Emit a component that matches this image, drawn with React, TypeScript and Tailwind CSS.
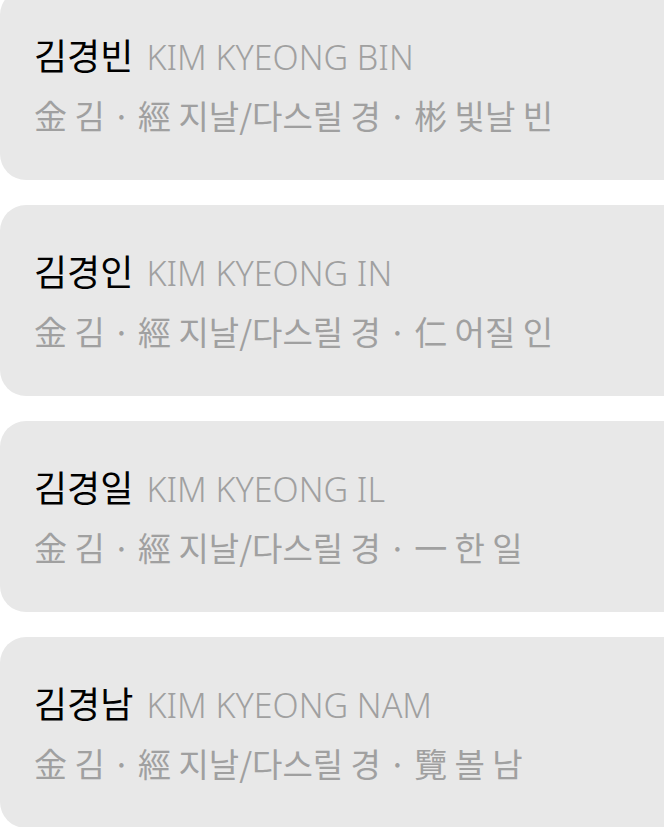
const names = [
  { ko: "김경빈", en: "KIM KYEONG BIN", meaning: "金 김 · 經 지날/다스릴 경 · 彬 빛날 빈" },
  { ko: "김경인", en: "KIM KYEONG IN", meaning: "金 김 · 經 지날/다스릴 경 · 仁 어질 인" },
  { ko: "김경일", en: "KIM KYEONG IL", meaning: "金 김 · 經 지날/다스릴 경 · 一 한 일" },
  { ko: "김경남", en: "KIM KYEONG NAM", meaning: "金 김 · 經 지날/다스릴 경 · 覽 볼 남" },
];

const cjk = { fontFamily: '"Noto Sans CJK KR", "Noto Sans", sans-serif' };
const latin = { fontFamily: '"Noto Sans", "Noto Sans CJK KR", sans-serif' };

export default function App() {
  return (
    <div className="h-[827px] w-[664px] overflow-hidden bg-white" style={cjk}>
      <div className="-mt-[11px] flex flex-col gap-[25px]">
        {names.map((n) => (
          <div
            key={n.ko}
            className="flex h-[191px] w-[720px] flex-col justify-center rounded-l-[26px] bg-[#e8e8e8] pl-[34px]"
          >
            <div className="flex items-baseline gap-[13px] leading-[58px]">
              <span className="text-[36px] text-black">{n.ko}</span>
              <span className="text-[34px] font-light text-[#a0a0a0]" style={latin}>
                {n.en}
              </span>
            </div>
            <div className="text-[33px] leading-[58px] text-[#a0a0a0]">{n.meaning}</div>
          </div>
        ))}
      </div>
    </div>
  );
}
